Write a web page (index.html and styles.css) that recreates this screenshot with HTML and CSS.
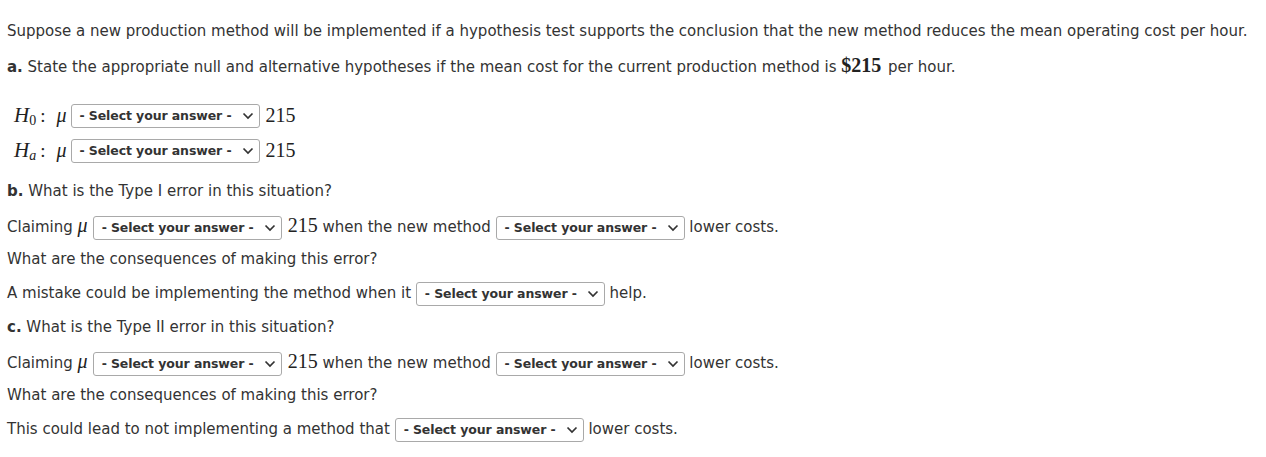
FILE: index.html
```html
<!DOCTYPE html>
<html>
<head>
<meta charset="utf-8">
<link rel="stylesheet" href="styles.css">
</head>
<body>
<div class="page">
  <p class="line">Suppose a new production method will be implemented if a hypothesis test supports the conclusion that the new method reduces the mean operating cost per hour.</p>
  <p class="line"><b>a.</b> State the appropriate null and alternative hypotheses if the mean cost for the current production method is <span class="num bold">$215</span> per hour.</p>
  <div class="hyp">
    <p class="hline"><span class="m"><i>H</i><sub>0</sub></span><span class="colon">:</span><i class="mu">μ</i><span class="sel">- Select your answer -<svg viewBox="0 0 12 8" width="12" height="8"><path d="M1.5 1.5 L6 6 L10.5 1.5" fill="none" stroke="#333" stroke-width="1.7"/></svg></span><span class="num">215</span></p>
    <p class="hline"><span class="m"><i>H</i><sub><i>a</i></sub></span><span class="colon">:</span><i class="mu">μ</i><span class="sel">- Select your answer -<svg viewBox="0 0 12 8" width="12" height="8"><path d="M1.5 1.5 L6 6 L10.5 1.5" fill="none" stroke="#333" stroke-width="1.7"/></svg></span><span class="num">215</span></p>
  </div>
  <p class="line"><b>b.</b> What is the Type I error in this situation?</p>
  <p class="line">Claiming <i class="mu">μ</i><span class="sel">- Select your answer -<svg viewBox="0 0 12 8" width="12" height="8"><path d="M1.5 1.5 L6 6 L10.5 1.5" fill="none" stroke="#333" stroke-width="1.7"/></svg></span><span class="num">215</span> when the new method <span class="sel">- Select your answer -<svg viewBox="0 0 12 8" width="12" height="8"><path d="M1.5 1.5 L6 6 L10.5 1.5" fill="none" stroke="#333" stroke-width="1.7"/></svg></span> lower costs.</p>
  <p class="line">What are the consequences of making this error?</p>
  <p class="line">A mistake could be implementing the method when it <span class="sel">- Select your answer -<svg viewBox="0 0 12 8" width="12" height="8"><path d="M1.5 1.5 L6 6 L10.5 1.5" fill="none" stroke="#333" stroke-width="1.7"/></svg></span> help.</p>
  <p class="line"><b>c.</b> What is the Type II error in this situation?</p>
  <p class="line">Claiming <i class="mu">μ</i><span class="sel">- Select your answer -<svg viewBox="0 0 12 8" width="12" height="8"><path d="M1.5 1.5 L6 6 L10.5 1.5" fill="none" stroke="#333" stroke-width="1.7"/></svg></span><span class="num">215</span> when the new method <span class="sel">- Select your answer -<svg viewBox="0 0 12 8" width="12" height="8"><path d="M1.5 1.5 L6 6 L10.5 1.5" fill="none" stroke="#333" stroke-width="1.7"/></svg></span> lower costs.</p>
  <p class="line">What are the consequences of making this error?</p>
  <p class="line">This could lead to not implementing a method that <span class="sel">- Select your answer -<svg viewBox="0 0 12 8" width="12" height="8"><path d="M1.5 1.5 L6 6 L10.5 1.5" fill="none" stroke="#333" stroke-width="1.7"/></svg></span> lower costs.</p>
</div>
</body>
</html>
```

FILE: styles.css
```css
html, body {
  margin: 0;
  padding: 0;
  background: #fff;
}
.page {
  padding: 14px 7px 0 7px;
  font-family: "DejaVu Sans", Verdana, sans-serif;
  font-size: 15px;
  color: #333;
}
.line {
  margin: 0;
  height: 34px;
  line-height: 34px;
  white-space: nowrap;
}
.line b {
  font-weight: bold;
  color: #333;
}
.hyp {
  padding: 16px 0 6px 7px;
}
.hline {
  margin: 0;
  height: 35px;
  line-height: 35px;
  white-space: nowrap;
  display: flex;
  align-items: center;
}
.m {
  font-family: "Liberation Serif", serif;
  font-size: 21px;
  color: #222;
}
.m sub {
  font-size: 14px;
  vertical-align: -3px;
  line-height: 0;
}
.colon {
  font-family: "Liberation Serif", serif;
  font-size: 19px;
  margin: 0 11px 0 4px;
  color: #222;
}
.mu {
  font-family: "Liberation Serif", serif;
  font-size: 20px;
  color: #222;
  margin-right: 5px;
}
.hline .mu {
  margin-right: 4px;
}
.num {
  font-family: "Liberation Serif", serif;
  font-size: 20px;
  color: #222;
  margin-left: 6px;
}
.num.bold {
  font-weight: bold;
  margin-left: 0;
  margin-right: 2px;
}
.sel {
  display: inline-flex;
  align-items: center;
  justify-content: space-between;
  box-sizing: border-box;
  width: 189px;
  height: 24px;
  padding: 0 5px 0 8px;
  border: 1px solid #a9a9a9;
  border-radius: 3px;
  font-family: "DejaVu Sans", Verdana, sans-serif;
  font-size: 12.5px;
  font-weight: bold;
  letter-spacing: -0.1px;
  color: #333;
  line-height: 22px;
  vertical-align: middle;
  background: #fff;
}
.sel svg {
  display: block;
}
```
